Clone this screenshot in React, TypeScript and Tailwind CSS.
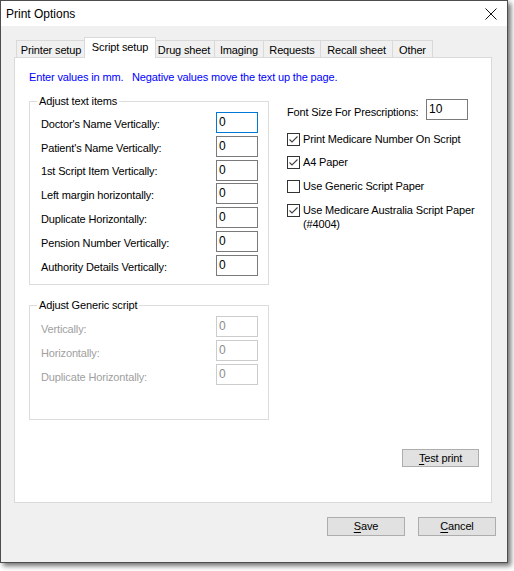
import React from "react";

const font = { fontFamily: '"Liberation Sans", Arial, sans-serif' };
const T = "text-[11px] tracking-[-0.15px]";

function Box({ value, focused, disabled }: { value: string; focused?: boolean; disabled?: boolean }) {
  const border = focused ? "border-[#0078d7]" : disabled ? "border-[#cccccc]" : "border-[#7a7a7a]";
  const color = disabled ? "text-[#8d8d8d]" : "text-black";
  return (
    <div className={`w-[42px] h-[21px] border ${border} bg-white ${color} pl-[2px] pt-[2px] text-[12px] leading-[14px] shrink-0`}>
      {value}
    </div>
  );
}

function Check({ checked, label, label2 }: { checked: boolean; label: string; label2?: string }) {
  return (
    <div className="flex items-start gap-[3px] h-[23.7px]">
      <div className="w-[13px] h-[13px] border border-[#333333] bg-white flex items-center justify-center shrink-0">
        {checked && (
          <svg width="11" height="11" viewBox="0 0 11 11">
            <path d="M1.5 5.5 L4 8 L9.5 2.5" fill="none" stroke="#404040" strokeWidth="1.1" />
          </svg>
        )}
      </div>
      <div className={`${T} leading-[14px] -mt-[1px] whitespace-nowrap`}>
        <div>{label}</div>
        {label2 && <div>{label2}</div>}
      </div>
    </div>
  );
}

function Tab({ label, w, selected }: { label: string; w: number; selected?: boolean }) {
  if (selected) {
    return (
      <div
        className={`relative z-10 h-[21px] -mx-[2px] border border-b-0 border-[#d9d9d9] bg-white ${T} leading-[18px] text-center whitespace-nowrap`}
        style={{ width: w + 4 }}
      >
        {label}
      </div>
    );
  }
  return (
    <div
      className={`h-[18px] mt-[3px] border border-b-0 border-[#d9d9d9] bg-[#f0f0f0] ${T} leading-[18px] text-center whitespace-nowrap -ml-[1px] first:ml-0`}
      style={{ width: w }}
    >
      {label}
    </div>
  );
}

function Btn({ label, u, w, h }: { label: string; u: string; w: number; h: number }) {
  const rest = label.slice(1);
  return (
    <div
      className={`border border-[#adadad] bg-[#e1e1e1] ${T} flex items-center justify-center`}
      style={{ width: w, height: h }}
    >
      <span>
        <span className="underline underline-offset-2">{u}</span>
        {rest}
      </span>
    </div>
  );
}

function Group({ title, h, children }: { title: string; h: number; children: React.ReactNode }) {
  return (
    <div className="relative border border-[#dcdcdc] w-[240px] pl-[11px] pr-[10px]" style={{ height: h }}>
      <span className={`absolute -top-[8px] left-[7px] bg-white px-[2px] ${T} leading-[14px]`}>{title}</span>
      {children}
    </div>
  );
}

export default function App() {
  const rows1 = [
    "Doctor's Name Vertically:",
    "Patient's Name Vertically:",
    "1st Script Item Vertically:",
    "Left margin horizontally:",
    "Duplicate Horizontally:",
    "Pension Number Vertically:",
    "Authority Details Vertically:",
  ];
  const rows2 = ["Vertically:", "Horizontally:", "Duplicate Horizontally:"];
  return (
    <div className="w-[514px] h-[571px] bg-white text-black" style={font}>
      <div className="w-[508px] h-[563px] border border-[#4d4d4d] flex flex-col shadow-[3px_3px_5px_rgba(0,0,0,0.55)]">
        {/* Title bar */}
        <div className="h-[25px] bg-white flex items-center justify-between pl-[5px] pr-[10px] shrink-0">
          <span className="text-[12px]">Print Options</span>
          <svg width="12" height="12" viewBox="0 0 12 12">
            <path d="M0.5 0.5 L11.5 11.5 M11.5 0.5 L0.5 11.5" stroke="#111" strokeWidth="1" />
          </svg>
        </div>
        {/* Body */}
        <div className="flex-1 bg-[#f0f0f0] pt-[11px] pl-[13px] flex flex-col">
          {/* Tabs */}
          <div className="flex items-start pl-[2px] h-[21px]">
            <Tab label="Printer setup" w={70} />
            <Tab label="Script setup" w={68} selected />
            <Tab label="Drug sheet" w={62} />
            <Tab label="Imaging" w={50} />
            <Tab label="Requests" w={58} />
            <Tab label="Recall sheet" w={73} />
            <Tab label="Other" w={41} />
          </div>
          {/* Panel */}
          <div className="w-[478px] h-[446px] -mt-[1px] border border-[#d9d9d9] bg-white flex flex-col pl-[14px] pt-[12px]">
            <div className={`${T} leading-[14px] text-[#0000ff] whitespace-pre`}>
              {"Enter values in mm.   Negative values move the text up the page."}
            </div>
            <div className="flex mt-[17px]">
              {/* Left column */}
              <div className="flex flex-col w-[240px]">
                <Group title="Adjust text items" h={184}>
                  <div className="flex flex-col gap-[2.8px] mt-[10px]">
                    {rows1.map((r, i) => (
                      <div key={r} className="flex items-center justify-between h-[21px]">
                        <span className={`${T} mt-[3px]`}>{r}</span>
                        <Box value="0" focused={i === 0} />
                      </div>
                    ))}
                  </div>
                </Group>
                <div className="h-[20px]" />
                <Group title="Adjust Generic script" h={115}>
                  <div className="flex flex-col gap-[3.5px] mt-[10px]">
                    {rows2.map((r) => (
                      <div key={r} className="flex items-center justify-between h-[20.5px]">
                        <span className={`${T} text-[#a0a0a0] mt-[5px]`}>{r}</span>
                        <Box value="0" disabled />
                      </div>
                    ))}
                  </div>
                </Group>
              </div>
              {/* Right column */}
              <div className="flex flex-col ml-[18px] -mt-[2px]">
                <div className="flex items-center w-[181px] justify-between">
                  <span className={`${T} mt-[5px]`}>Font Size For Prescriptions:</span>
                  <Box value="10" />
                </div>
                <div className="flex flex-col mt-[12px]">
                  <Check checked label="Print Medicare Number On Script" />
                  <Check checked label="A4 Paper" />
                  <Check checked={false} label="Use Generic Script Paper" />
                  <Check checked label="Use Medicare Australia Script Paper" label2="(#4004)" />
                </div>
              </div>
            </div>
            <div className="flex justify-end pr-[12px] mt-auto mb-[35px]">
              <Btn label="Test print" u="T" w={77} h={18} />
            </div>
          </div>
          {/* Footer buttons */}
          <div className="flex justify-end gap-[13px] pr-[11px] mt-[14px]">
            <Btn label="Save" u="S" w={78} h={19} />
            <Btn label="Cancel" u="C" w={78} h={19} />
          </div>
        </div>
      </div>
    </div>
  );
}
